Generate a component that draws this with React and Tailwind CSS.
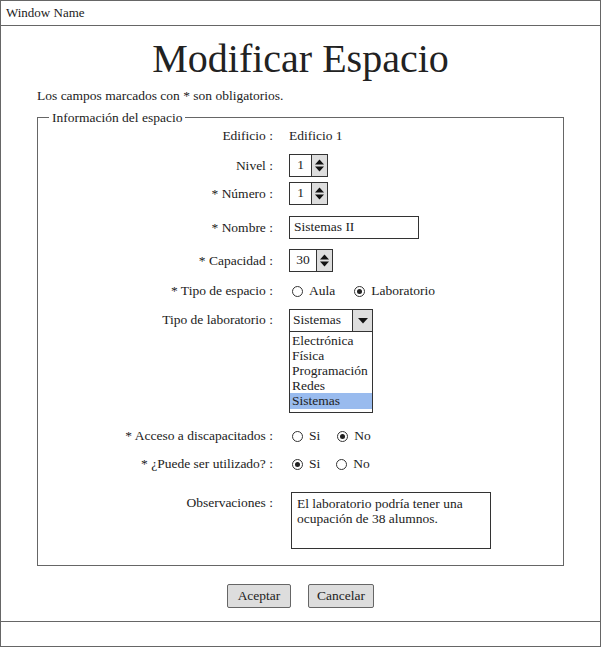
import React from "react";

function Spinner({ value, wide }) {
  return (
    <div className="flex h-[23px] border border-[#333] bg-white">
      <div className={`flex items-center justify-center ${wide ? "w-[26px]" : "w-[21px]"}`}>{value}</div>
      <div className="flex w-[16px] items-center justify-center border-l border-[#333] bg-[#ddd]">
        <svg width="9" height="13" viewBox="0 0 9 13">
          <polygon points="0,5.5 4.5,0.5 9,5.5" fill="#111" />
          <polygon points="0,7.5 4.5,12.5 9,7.5" fill="#111" />
        </svg>
      </div>
    </div>
  );
}

function Radio({ checked, label }) {
  return (
    <div className="flex items-center">
      <span className="flex h-[11px] w-[11px] items-center justify-center rounded-full border border-[#333] bg-white">
        {checked && <span className="h-[5px] w-[5px] rounded-full bg-[#222]" />}
      </span>
      <span className="ml-[6px]">{label}</span>
    </div>
  );
}

function Row({ label, className = "", align = "items-center", children }) {
  return (
    <div className={`flex ${align} ${className}`}>
      <div className="w-[235px] shrink-0 text-right leading-[22px]">{label}</div>
      <div className="ml-[16px] flex">{children}</div>
    </div>
  );
}

export default function App() {
  const labs = ["Electrónica", "Física", "Programación", "Redes", "Sistemas"];

  return (
    <div className="flex h-[647px] w-[601px] flex-col border border-[#666] bg-white [font-family:'Liberation_Serif',serif] text-[13.5px] text-[#222]">
      {/* title bar */}
      <div className="flex h-[25px] shrink-0 items-center border-b border-[#666] px-[5px] text-[13px]">Window Name</div>

      <div className="flex flex-1 flex-col">
        <h1 className="mt-[10px] text-center text-[40px] leading-[46px] text-[#222]">Modificar Espacio</h1>
        <p className="mt-[6px] pl-[36px] leading-[15px]">Los campos marcados con * son obligatorios.</p>

        <fieldset className="mx-[36px] mt-[7px] border border-[#666] pb-[16px]">
          <legend className="ml-[11px] px-[3px] leading-[15px]">Información del espacio</legend>

          <Row label="Edificio :" className="h-[22px]">
            <span>Edificio 1</span>
          </Row>

          <Row label="Nivel :" className="mt-[7px] h-[23px]">
            <Spinner value="1" />
          </Row>

          <Row label="* Número :" className="mt-[5px] h-[23px]">
            <Spinner value="1" />
          </Row>

          <Row label="* Nombre :" className="mt-[11px] h-[23px]">
            <div className="flex h-[23px] w-[130px] items-center border border-[#333] bg-white pl-[4px]">Sistemas II</div>
          </Row>

          <Row label="* Capacidad :" className="mt-[10px] h-[23px]">
            <Spinner value="30" wide />
          </Row>

          <Row label="* Tipo de espacio :" className="mt-[8px] h-[22px]">
            <div className="ml-[3px] flex gap-[19px]">
              <Radio label="Aula" />
              <Radio checked label="Laboratorio" />
            </div>
          </Row>

          <Row label="Tipo de laboratorio :" align="items-start" className="mt-[7px]">
            <div className="flex w-[84px] flex-col">
              <div className="flex h-[23px] border border-[#333] bg-white">
                <div className="flex flex-1 items-center pl-[3px]">Sistemas</div>
                <div className="flex w-[20px] items-center justify-center border-l border-[#333] bg-[#ddd]">
                  <svg width="10" height="6" viewBox="0 0 10 6">
                    <polygon points="0,0 10,0 5,5.5" fill="#111" />
                  </svg>
                </div>
              </div>
              <div className="flex flex-col border border-t-0 border-[#333] bg-white pb-[3px] pt-[1px]">
                {labs.map((l) => (
                  <div
                    key={l}
                    className={`pl-[2px] leading-[15px] ${l === "Sistemas" ? "h-[16px] bg-[#99bbee]" : "h-[15px]"}`}
                  >
                    {l}
                  </div>
                ))}
              </div>
            </div>
          </Row>

          <Row label="* Acceso a discapacitados :" className="mt-[12px] h-[22px]">
            <div className="ml-[3px] flex gap-[17px]">
              <Radio label="Si" />
              <Radio checked label="No" />
            </div>
          </Row>

          <Row label="* ¿Puede ser utilizado? :" className="mt-[6px] h-[22px]">
            <div className="ml-[3px] flex gap-[16px]">
              <Radio checked label="Si" />
              <Radio label="No" />
            </div>
          </Row>

          <Row label="Observaciones :" align="items-start" className="mt-[17px]">
            <div className="ml-[2px] h-[57px] w-[200px] border border-[#333] bg-white px-[5px] pt-[3px] leading-[15px]">
              El laboratorio podría tener una ocupación de 38 alumnos.
            </div>
          </Row>
        </fieldset>

        <div className="mt-[18px] flex justify-center gap-[17px]">
          <button className="h-[24px] w-[64px] rounded-[2px] border border-[#666] bg-[#ddd]">Aceptar</button>
          <button className="h-[24px] w-[66px] rounded-[2px] border border-[#666] bg-[#ddd]">Cancelar</button>
        </div>
      </div>

      <div className="h-[25px] shrink-0 border-t border-[#666]" />
    </div>
  );
}
